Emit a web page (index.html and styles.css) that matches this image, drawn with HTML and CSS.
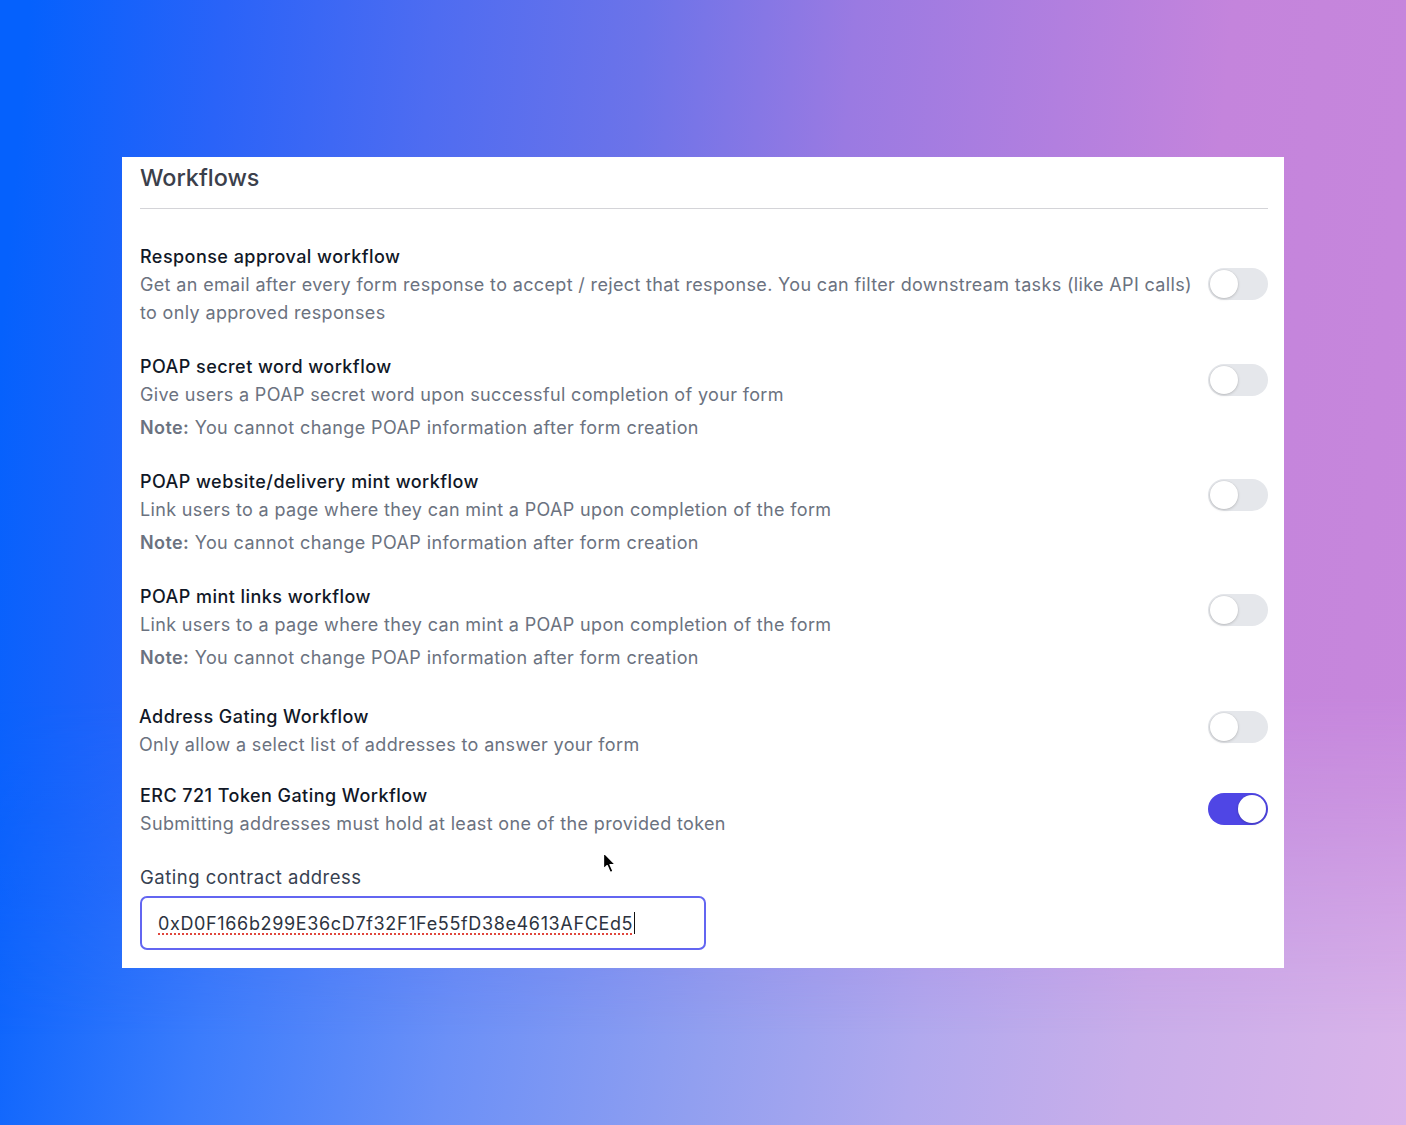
FILE: index.html
```html
<!DOCTYPE html>
<html lang="en">
<head>
<meta charset="utf-8">
<title>Workflows</title>
<link rel="stylesheet" href="styles.css">
</head>
<body>
<div class="page">
  <div class="card">
    <h2 class="card-title">Workflows</h2>
    <div class="divider"></div>
    <div class="list">
      <div class="item">
        <div class="row">
          <div class="text">
            <div class="item-title">Response approval workflow</div>
            <div class="item-desc">Get an email after every form response to accept / reject that response. You can filter downstream tasks (like API calls) to only approved responses</div>
          </div>
          <div class="toggle"><span class="knob"></span></div>
        </div>
      </div>
      <div class="item">
        <div class="row">
          <div class="text">
            <div class="item-title">POAP secret word workflow</div>
            <div class="item-desc">Give users a POAP secret word upon successful completion of your form</div>
          </div>
          <div class="toggle"><span class="knob"></span></div>
        </div>
        <div class="note"><b>Note:</b> You cannot change POAP information after form creation</div>
      </div>
      <div class="item">
        <div class="row">
          <div class="text">
            <div class="item-title">POAP website/delivery mint workflow</div>
            <div class="item-desc">Link users to a page where they can mint a POAP upon completion of the form</div>
          </div>
          <div class="toggle"><span class="knob"></span></div>
        </div>
        <div class="note"><b>Note:</b> You cannot change POAP information after form creation</div>
      </div>
      <div class="item">
        <div class="row">
          <div class="text">
            <div class="item-title">POAP mint links workflow</div>
            <div class="item-desc">Link users to a page where they can mint a POAP upon completion of the form</div>
          </div>
          <div class="toggle"><span class="knob"></span></div>
        </div>
        <div class="note"><b>Note:</b> You cannot change POAP information after form creation</div>
      </div>
      <div class="item item-address">
        <div class="row">
          <div class="text shifted">
            <div class="item-title">Address Gating Workflow</div>
            <div class="item-desc">Only allow a select list of addresses to answer your form</div>
          </div>
          <div class="toggle raised"><span class="knob"></span></div>
        </div>
      </div>
      <div class="item item-erc">
        <div class="row">
          <div class="text">
            <div class="item-title">ERC 721 Token Gating Workflow</div>
            <div class="item-desc">Submitting addresses must hold at least one of the provided token</div>
          </div>
          <div class="toggle on"><span class="knob"></span></div>
        </div>
      </div>
      <div class="field">
        <div class="field-label">Gating contract address</div>
        <div class="input"><span class="value">0xD0F166b299E36cD7f32F1Fe55fD38e4613AFCEd5</span><span class="caret"></span></div>
      </div>
    </div>
    <svg class="pointer" width="16" height="24" viewBox="0 0 16 24" aria-hidden="true">
      <path d="M1.5 1.5 L1.5 18 L5.2 14.6 L8.2 21.5 L11 20.3 L8 13.6 L13 13.3 Z" fill="#000" stroke="#fff" stroke-width="1.3" stroke-linejoin="round"/>
    </svg>
  </div>
</div>
</body>
</html>
```

FILE: styles.css
```css
html, body {
  margin: 0;
  padding: 0;
}

body {
  font-family: Inter, "Noto Sans", "Liberation Sans", sans-serif;
  -webkit-font-smoothing: antialiased;
}

.page {
  position: relative;
  width: 1406px;
  height: 1125px;
  display: flex;
  align-items: center;
  justify-content: center;
  overflow: hidden;
  background: linear-gradient(98deg, #0561fd 6%, #3b7cfc 22%, #6b90f7 38%, #919ff0 54%, #b1a9ee 68%, #c9aeea 82%, #dab4ea 100%);
}

.page::before {
  content: "";
  position: absolute;
  inset: 0;
  background: linear-gradient(95deg, #0561fd 2%, #2a63f8 15%, #4e6cf1 29%, #6c73e9 43%, #9a7ae2 57%, #b27fdf 71%, #c484dc 82%, #c787dc 100%);
  -webkit-mask-image: linear-gradient(to bottom, #000 0%, #000 62%, transparent 92%);
  mask-image: linear-gradient(to bottom, #000 0%, #000 62%, transparent 92%);
}

.card {
  position: relative;
  z-index: 1;
  width: 1162px;
  height: 811px;
  box-sizing: border-box;
  background: #fff;
  padding: 5px 16px 0 18px;
}

.card-title {
  margin: 0;
  font-size: 23.4px;
  line-height: 32px;
  font-weight: 500;
  color: #3b404b;
}

.divider {
  margin-top: 14px;
  height: 1px;
  background: #d4d4d8;
}

.list {
  margin-top: 34px;
  display: flex;
  flex-direction: column;
  gap: 26px;
}

.row {
  display: flex;
  align-items: center;
  gap: 10px;
}

.text {
  flex: 1;
  min-width: 0;
}

.shifted {
  margin-left: -1px;
}

.item-title {
  font-size: 18px;
  line-height: 28px;
  font-weight: 500;
  letter-spacing: 0.45px;
  color: #111827;
}

.item-desc {
  font-size: 18px;
  line-height: 28px;
  letter-spacing: 0.35px;
  color: #6b7280;
}

.note {
  margin-top: 5px;
  font-size: 18px;
  line-height: 28px;
  letter-spacing: 0.4px;
  color: #6b7280;
}

.note b {
  font-weight: 600;
}

.item-address {
  margin-top: 5px;
}

.item-erc {
  margin-top: -3px;
}

.field {
  margin-top: -1px;
}

.toggle {
  flex: none;
  width: 60px;
  height: 32px;
  border-radius: 16px;
  background: #e5e7eb;
  display: flex;
  align-items: center;
  padding: 0 2px;
  box-sizing: border-box;
  margin-bottom: 3px;
}

.toggle.raised {
  margin-bottom: 8px;
}

.knob {
  width: 28px;
  height: 28px;
  border-radius: 50%;
  background: #fff;
  box-shadow: 0 1px 3px rgba(0, 0, 0, 0.18), 0 0 0 0.5px rgba(0, 0, 0, 0.05);
}

.toggle.on {
  background: #4f46e5;
  justify-content: flex-end;
}

.field-label {
  font-size: 18.5px;
  line-height: 28px;
  letter-spacing: 0.5px;
  color: #374151;
}

.input {
  margin-top: 5px;
  width: 566px;
  height: 54px;
  box-sizing: border-box;
  border: 2px solid #6366f1;
  border-radius: 7px;
  display: flex;
  align-items: center;
  padding: 0 16px;
  font-size: 18px;
  letter-spacing: 0.64px;
  color: #2d3340;
}

.value {
  text-decoration: underline dotted #e0463c;
  text-decoration-thickness: 1.5px;
  text-underline-offset: 4px;
}

.caret {
  width: 1px;
  height: 22px;
  background: #111;
  margin-left: 1px;
}

.pointer {
  position: absolute;
  left: 480px;
  top: 694px;
}
```
